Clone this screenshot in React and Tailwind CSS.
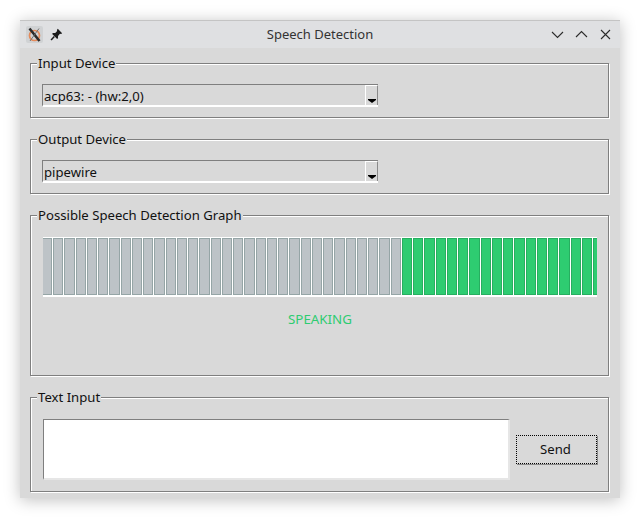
const bars = Array.from({ length: 50 }, (_, i) => i >= 32);

function Group({ label, className, children }) {
  return (
    <div
      className={`relative w-[579px] border border-[#7f7f7f] shadow-[inset_1px_1px_0_#ffffff,1px_1px_0_#ffffff] ${className}`}
    >
      <span className="absolute left-[6px] top-[-11px] bg-[#d9d9d9] px-px text-[13.15px] leading-[20px] text-[#111]">
        {label}
      </span>
      {children}
    </div>
  );
}

function Combo({ value }) {
  return (
    <div className="flex h-[23px] w-[336px] border-t border-l border-[#7f7f7f] border-b-2 border-b-white">
      <div className="flex-1 pl-px text-[13.15px] leading-[22px] text-[#111]">{value}</div>
      <div className="flex w-[13px] flex-col items-center justify-end border-t border-l border-white border-r border-r-[#8a8a8a] pb-[2px]">
        <svg width="8" height="4" viewBox="0 0 8 4">
          <path d="M0 0H8V1L4 4L0 1Z" fill="#000" />
        </svg>
      </div>
    </div>
  );
}

export default function App() {
  return (
    <div className="h-[518px] w-[640px] overflow-hidden bg-white pl-[20px] pt-[20px] font-['Noto_Sans',sans-serif]">
      <div className="h-[478px] w-[600px] rounded-t-[2px] bg-[#d9d9d9] shadow-[0_2px_16px_rgba(0,0,0,0.25)]">
        <div className="grid h-[28px] grid-cols-[1fr_auto_1fr] items-center border-t border-[#c4c4c4] bg-[#dfe0e2] pl-[6px] pr-[8px]">
          <div className="flex items-center">
            <div className="flex h-[17px] w-[17px] items-center justify-center rounded-[2px] bg-[#d0d2d4]">
              <svg width="15" height="15" viewBox="0 0 15 15">
                <circle cx="7.5" cy="8.5" r="5" fill="none" stroke="#e58a5a" strokeWidth="1.7" />
                <path d="M2.5 1.5L12.5 14" stroke="#2a2a2a" strokeWidth="2.6" />
                <path d="M12 1.5L3 14" stroke="#666" strokeWidth="0.9" />
              </svg>
            </div>
            <svg className="ml-[7px]" width="13" height="13" viewBox="0 0 12 12">
              <path d="M7.2 0.8L11.2 4.8L10.2 5.6L9.2 5.4L7.4 7.4L7.4 9.6L6.4 10L2 5.6L2.6 4.6L4.8 4.6L6.6 2.8L6.4 1.8Z" fill="#1c1c1c" />
              <path d="M4 7.8L1 11" stroke="#1c1c1c" strokeWidth="1.4" />
            </svg>
          </div>
          <div className="pl-[2px] text-center text-[13px] text-[#333]">Speech Detection</div>
          <div className="flex items-center justify-end gap-[11px]">
            <svg width="13" height="13" viewBox="0 0 13 13">
              <path d="M1 4L6.5 9.5L12 4" fill="none" stroke="#2b2b2b" strokeWidth="1.1" />
            </svg>
            <svg width="13" height="13" viewBox="0 0 13 13">
              <path d="M1 9L6.5 3.5L12 9" fill="none" stroke="#2b2b2b" strokeWidth="1.1" />
            </svg>
            <svg width="13" height="13" viewBox="0 0 13 13">
              <path d="M2 2L11 11M11 2L2 11" fill="none" stroke="#2b2b2b" strokeWidth="1.1" />
            </svg>
          </div>
        </div>

        <div className="flex flex-col gap-[21px] pl-[10px] pt-[15px]">
          <Group label="Input Device" className="h-[55px] pl-[11px] pt-[20px]">
            <Combo value="acp63: - (hw:2,0)" />
          </Group>
          <Group label="Output Device" className="h-[55px] pl-[11px] pt-[20px]">
            <Combo value="pipewire" />
          </Group>
          <Group label="Possible Speech Detection Graph" className="h-[161px] pl-[12px] pt-[21px]">
            <div className="h-[60px] w-[554px] overflow-hidden bg-white pb-[2px] pt-px">
              <div className="ml-[-1.25px] grid h-full w-[562.5px] grid-cols-[repeat(50,11.25px)]">
                {bars.map((on, i) => (
                  <div key={i} className="bg-white pr-px">
                    <div
                      className={
                        on
                          ? "h-full border border-[#27ae60] bg-[#2ecc71]"
                          : "h-full border border-[#95a5a6] bg-[#bdc3c7]"
                      }
                    />
                  </div>
                ))}
              </div>
            </div>
            <div className="mt-[12px] pr-[11px] text-center text-[13.33px] leading-[20px] text-[#2ecc71]">
              SPEAKING
            </div>
          </Group>
          <Group label="Text Input" className="h-[95px] pl-[12px] pt-[21px]">
            <div className="flex items-center gap-[6px]">
              <textarea className="h-[61px] w-[467px] resize-none border-t border-l border-[#7f7f7f] border-b-2 border-r-2 border-b-[#e6e6e6] border-r-[#e6e6e6] bg-white outline-none" />
              <button className="h-[29px] w-[81px] border border-dotted border-black pr-[2px] text-[13.15px] text-[#111] shadow-[1px_1px_0_#8a8a8a]">
                Send
              </button>
            </div>
          </Group>
        </div>
      </div>
    </div>
  );
}
